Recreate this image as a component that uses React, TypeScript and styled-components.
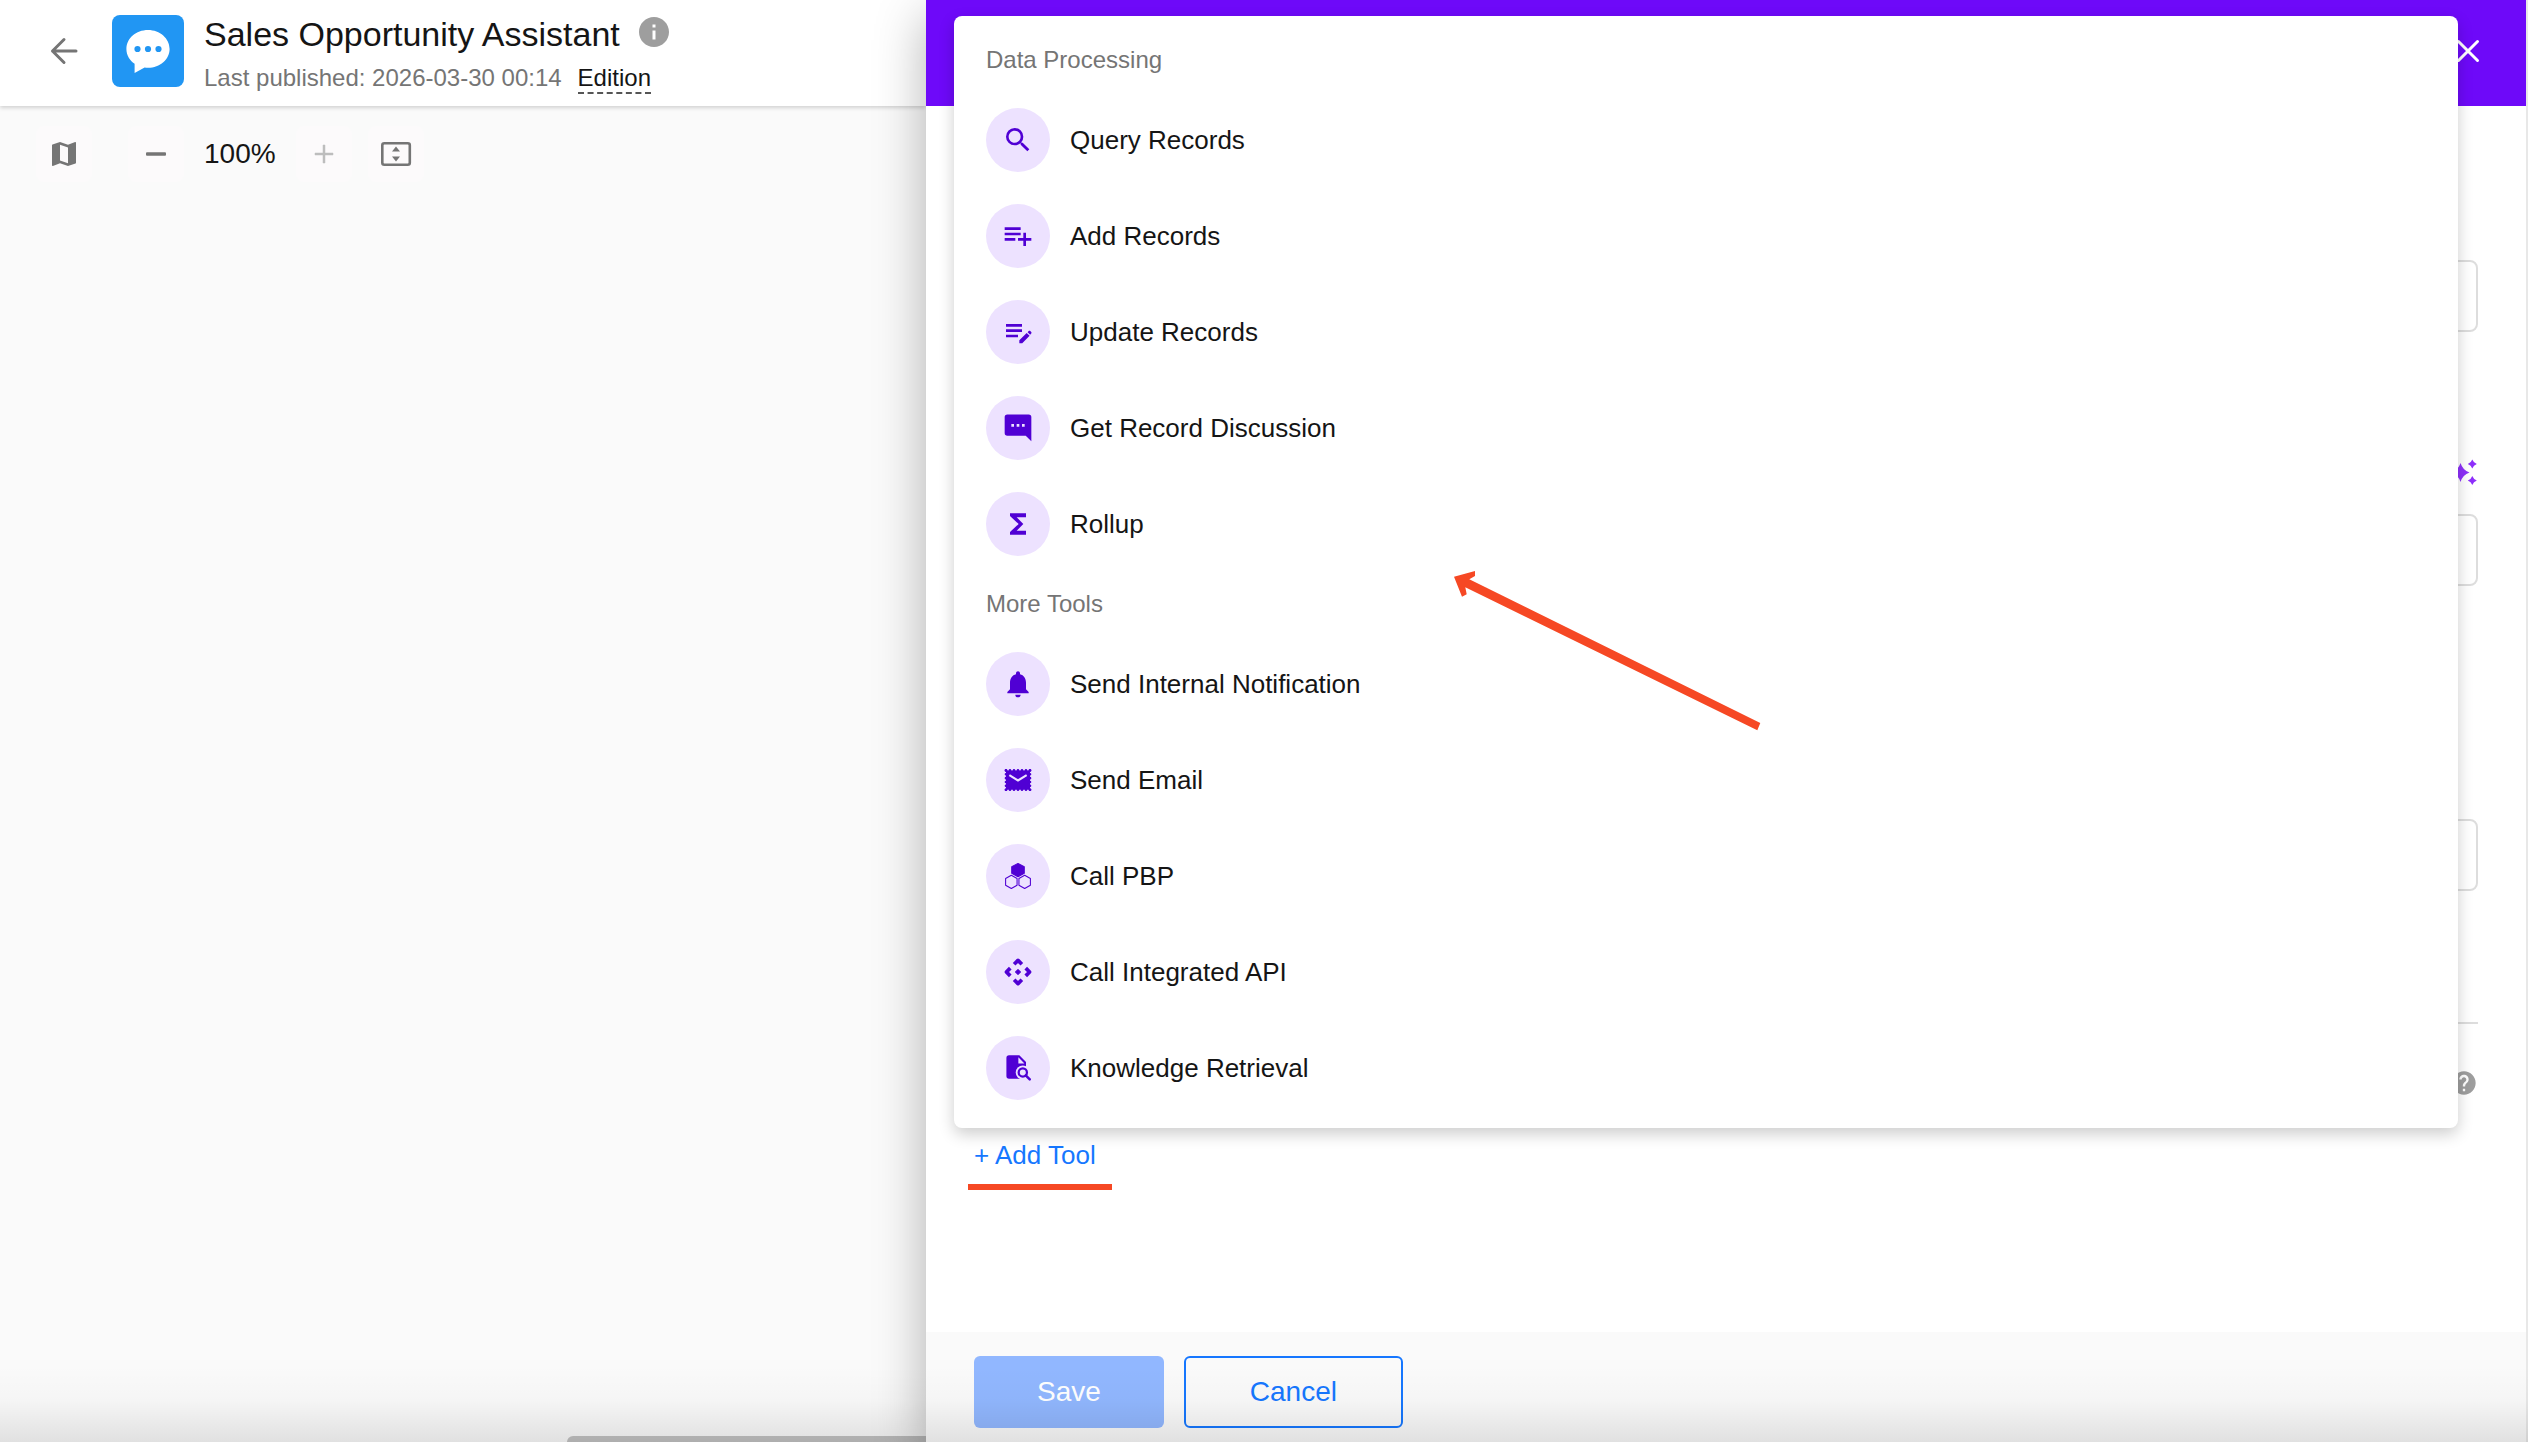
import React from "react";
import styled, { createGlobalStyle } from "styled-components";
import {
  MdFunctions,
  MdHelp,
  MdInfo,
  MdMap,
  MdNotifications,
  MdSearch,
} from "react-icons/md";

const color = {
  text: "#151515",
  muted: "#757575",
  faint: "#9e9e9e",
  disabled: "#bdbdbd",
  canvas: "#fafafa",
  line: "#dddddd",
  blue: "#1677ff",
  appBlue: "#2196f3",
  purple: "#6e09f9",
  toolPurple: "#5000d4",
  toolTint: "#ede2ff",
  mark: "#f64824",
};

const GlobalStyle = createGlobalStyle`
  *, *::before, *::after { box-sizing: border-box; }
  body {
    margin: 0;
    background: ${color.canvas};
    color: ${color.text};
    font-family: "Liberation Sans", Arial, sans-serif;
  }
  button, input { font: inherit; }
  button { padding: 0; border: 0; background: none; cursor: pointer; }
  svg { display: block; flex: none; }
`;

const Page = styled.div`
  position: relative;
  display: flex;
  min-height: 100vh;
  overflow: hidden;
`;

const BottomFade = styled.div`
  position: absolute;
  left: 0;
  right: 0;
  bottom: 0;
  height: 76px;
  z-index: 3;
  pointer-events: none;
  background: linear-gradient(
    to bottom,
    rgba(0, 0, 0, 0),
    rgba(0, 0, 0, 0.02) 45%,
    rgba(0, 0, 0, 0.1)
  );
`;

/* Workflow side */

const Workspace = styled.main`
  flex: 1;
  min-width: 0;
  display: flex;
  flex-direction: column;
`;

const TopBar = styled.header`
  display: flex;
  align-items: center;
  height: 106px;
  padding: 0 0 4px 36px;
  background: #fff;
  box-shadow: 0 2px 4px rgba(0, 0, 0, 0.16);
`;

const IconButton = styled.button<{ $tinted?: boolean; $color?: string }>`
  display: flex;
  align-items: center;
  justify-content: center;
  width: 56px;
  height: 56px;
  border-radius: 8px;
  color: ${(p) => p.$color ?? color.muted};
  background: ${(p) => (p.$tinted ? "#fcfafb" : "transparent")};
`;

const AppBadge = styled.div`
  width: 72px;
  height: 72px;
  margin: 0 20px;
  border-radius: 8px;
  background: ${color.appBlue};
`;

const Heading = styled.div`
  display: flex;
  flex-direction: column;
  gap: 10px;
  padding-top: 6px;
`;

const TitleRow = styled.div`
  display: flex;
  align-items: flex-start;
  gap: 16px;
  height: 40px;
  color: ${color.faint};
`;

const Title = styled.h1`
  margin: 0;
  font-size: 34px;
  font-weight: 400;
  line-height: 40px;
  color: ${color.text};
  white-space: nowrap;
`;

const Published = styled.div`
  display: flex;
  gap: 16px;
  font-size: 24px;
  line-height: 28px;
  color: ${color.muted};
  white-space: nowrap;
`;

const EditionLink = styled.a`
  color: ${color.text};
  text-decoration: none;
  border-bottom: 2px dashed #555;
`;

const Toolbar = styled.div`
  display: flex;
  align-items: center;
  padding: 20px 36px;
`;

const ZoomGroup = styled.div`
  display: flex;
  align-items: center;
  gap: 20px;
  margin: 0 16px 0 36px;
`;

const ZoomValue = styled.output`
  font-size: 28px;
  line-height: 32px;
`;

const ScrollTrack = styled.div`
  display: flex;
  justify-content: flex-end;
  margin-top: auto;
`;

const ScrollThumb = styled.div`
  width: 359px;
  height: 6px;
  border-top-left-radius: 6px;
  background: #c2c2c2;
`;

/* Drawer */

const Drawer = styled.aside`
  position: relative;
  z-index: 1;
  display: flex;
  flex-direction: column;
  width: 1602px;
  border-right: 2px solid #e8e8e8;
  background: #fff;
  box-shadow: 0 16px 48px rgba(0, 0, 0, 0.3);
`;

const DrawerHead = styled.header`
  display: flex;
  align-items: center;
  justify-content: flex-end;
  height: 106px;
  padding: 0 30px 4px 0;
  background: ${color.purple};
`;

const DrawerBody = styled.div`
  flex: 1;
  display: flex;
  flex-direction: column;
  align-items: stretch;
  padding: 0 48px;
`;

const Field = styled.input<{ $top: number }>`
  width: 100%;
  height: 72px;
  margin: ${(p) => p.$top}px 0 0;
  padding: 0 24px;
  border: 2px solid ${color.line};
  border-radius: 8px;
  background: #fff;
  font-size: 26px;
`;

const FieldHead = styled.div<{ $top: number }>`
  display: flex;
  align-items: center;
  justify-content: flex-end;
  height: 44px;
  margin-top: ${(p) => p.$top}px;
  color: ${color.faint};
`;

const Divider = styled.hr`
  width: 100%;
  margin: 131px 0 0;
  border: 0;
  border-top: 2px solid ${color.line};
`;

const AddTool = styled.button`
  position: relative;
  align-self: flex-start;
  height: 44px;
  margin-top: 28px;
  font-size: 26px;
  line-height: 44px;
  color: ${color.blue};
`;

const Underline = styled.span`
  position: absolute;
  left: -6px;
  right: -16px;
  top: 51px;
  height: 6px;
  background: ${color.mark};
`;

const DrawerFoot = styled.footer`
  display: flex;
  gap: 20px;
  height: 110px;
  padding: 24px 48px 0;
  background: ${color.canvas};
`;

const Action = styled.button<{ $outlined?: boolean }>`
  height: 72px;
  padding: 0 ${(p) => (p.$outlined ? 64 : 63)}px;
  border: ${(p) => (p.$outlined ? `2px solid ${color.blue}` : "0")};
  border-radius: 6px;
  font-size: 28px;
  line-height: 32px;
  color: ${(p) => (p.$outlined ? color.blue : "#fff")};
  background: ${(p) => (p.$outlined ? "transparent" : "#91b7ff")};
`;

/* Tool menu */

const Menu = styled.div`
  position: absolute;
  z-index: 2;
  top: 16px;
  left: 28px;
  right: 68px;
  padding: 12px 0;
  border-radius: 8px;
  background: #fff;
  box-shadow: 0 6px 16px rgba(0, 0, 0, 0.2);
`;

const MenuLabel = styled.div`
  padding: 0 32px;
  font-size: 24px;
  line-height: 64px;
  color: ${color.muted};
`;

const MenuItem = styled.button`
  display: flex;
  align-items: center;
  gap: 20px;
  width: 100%;
  height: 96px;
  padding: 0 32px;
  font-size: 26px;
  line-height: 32px;
  color: ${color.text};
  text-align: left;
`;

const ToolCircle = styled.span`
  display: flex;
  align-items: center;
  justify-content: center;
  width: 64px;
  height: 64px;
  border-radius: 50%;
  color: ${color.toolPurple};
  background: ${color.toolTint};
`;

const Pointer = styled.svg`
  position: absolute;
  left: 500px;
  top: 555px;
  pointer-events: none;
`;

/* Icons */

const Glyph = ({ children }: { children: React.ReactNode }) => (
  <svg width="32" height="32" viewBox="0 0 24 24" fill="currentColor" aria-hidden="true">
    {children}
  </svg>
);

const AddRecordsIcon = () => (
  <Glyph>
    <path d="M14 9.500H2v2h12v-2zm0-4H2v2h12v-2zm4 8v-4h-2v4h-4v2h4v4h2v-4h4v-2h-4zM2 15.500h8v-2H2v2z" />
  </Glyph>
);

const UpdateRecordsIcon = () => (
  <Glyph>
    <path d="M3 6h12v2H3zM3 10h12v2H3zM3 14h9v2H3z" />
    <path d="M19.200 12.100l.8-.8c.3-.3.9-.3 1.200 0l.7.7c.3.300.3.900 0 1.200l-.8.800zM18.500 12.700l2.200 2.200-5.500 5.500H13v-2.200z" />
  </Glyph>
);

const DiscussionIcon = () => (
  <Glyph>
    <path
      fillRule="evenodd"
      d="M4 1.800h16a2 2 0 0 1 2 2V22l-4.200-4.200H4a2 2 0 0 1-2-2v-12a2 2 0 0 1 2-2zM7 9v2h2V9zM11 9v2h2V9zM15 9v2h2V9z"
    />
  </Glyph>
);

const StampIcon = () => (
  <Glyph>
    <rect x="3" y="4.800" width="18" height="14.500" />
    <g stroke="currentColor" strokeWidth="2" strokeLinecap="round">
      <path d="M3 4.800H21.100M3 19.300H21.100" strokeDasharray="0 3" />
      <path d="M3 4.800V19.400M21 4.800V19.400" strokeDasharray="0 2.900" />
    </g>
    <path d="M5.500 8.300L12 12.300l6.500-4" fill="none" stroke={color.toolTint} strokeWidth="1.600" />
  </Glyph>
);

const HexagonsIcon = () => (
  <Glyph>
    <path
      d="M12 2.600l4.700 2.400v5L12 12.500 7.300 10V5z"
      stroke="currentColor"
      strokeWidth="0.800"
      strokeLinejoin="round"
    />
    <g fill="none" stroke="currentColor" strokeWidth="0.800" strokeLinejoin="round">
      <path d="M7 11.500l4.300 2.400v5L7 21.400l-4.300-2.500v-5z" />
      <path d="M17 11.500l4.300 2.400v5L17 21.400l-4.300-2.500v-5z" />
    </g>
  </Glyph>
);

const ApiIcon = () => (
  <Glyph>
    <g fill="none" stroke="currentColor" strokeWidth="2.800" strokeLinejoin="round">
      {[0, 90, 180, 270].map((turn) => (
        <path key={turn} d="M9.100 6.200L12 3.300l2.900 2.900" transform={`rotate(${turn} 12 12)`} />
      ))}
    </g>
    <path
      d="M12 10.200l1.800 1.800-1.800 1.800-1.800-1.800z"
      stroke="currentColor"
      strokeWidth="0.800"
      strokeLinejoin="round"
    />
  </Glyph>
);

const KnowledgeIcon = () => (
  <Glyph>
    <path d="M5.300 2.500H13L18 7.500V20H5.300a2 2 0 0 1-2-2V4.500a2 2 0 0 1 2-2z" />
    <path d="M12.300 4v4.600h4.500z" fill={color.toolTint} />
    <circle cx="15.600" cy="15.400" r="5.300" fill={color.toolTint} />
    <path d="M15 20.700L19 13l4 8z" fill={color.toolTint} />
    <circle cx="15.600" cy="15.300" r="3.100" fill="none" stroke="currentColor" strokeWidth="1.700" />
    <path d="M17.800 17.500l3 3" stroke="currentColor" strokeWidth="1.900" strokeLinecap="round" />
  </Glyph>
);

const BackIcon = () => (
  <svg width="32" height="32" viewBox="0 0 32 32" fill="none" stroke="currentColor" strokeWidth="3" strokeLinecap="round" strokeLinejoin="round" aria-hidden="true">
    <path d="M28 16H4.500M16 4.500L4.500 16 16 27.500" />
  </svg>
);

const ChatLogo = () => (
  <svg width="72" height="72" viewBox="0 0 72 72" aria-hidden="true">
    <path
      fill="#fff"
      d="M36 15c-12 0-21.600 8.400-21.600 18.900 0 6.200 3.300 11.400 8.200 14.800V58l10-5.600c1.100.2 2.300.3 3.400.3 12 0 21.600-8.400 21.600-18.800S48 15 36 15z"
    />
    <g fill={color.appBlue}>
      <circle cx="25.500" cy="34" r="3.100" />
      <circle cx="36" cy="34" r="3.100" />
      <circle cx="46.500" cy="34" r="3.100" />
    </g>
  </svg>
);

const MinusIcon = () => (
  <svg width="32" height="32" viewBox="0 0 32 32" aria-hidden="true">
    <rect x="6" y="14.200" width="20" height="3.600" rx="1" fill="currentColor" />
  </svg>
);

const PlusIcon = () => (
  <svg width="32" height="32" viewBox="0 0 32 32" aria-hidden="true">
    <path d="M15 7h2v8h8v2h-8v8h-2v-8H7v-2h8z" fill="currentColor" stroke="currentColor" strokeWidth="0.500" />
  </svg>
);

const FitIcon = () => (
  <svg width="32" height="32" viewBox="0 0 32 32" aria-hidden="true">
    <rect x="2.300" y="5.200" width="27.500" height="21.600" rx="2" fill="none" stroke="currentColor" strokeWidth="2.600" />
    <path d="M16 8.500l4 5h-8zM16 23.500l4-5h-8z" fill="currentColor" />
  </svg>
);

const CloseIcon = () => (
  <svg width="32" height="32" viewBox="0 0 32 32" fill="none" stroke="currentColor" strokeWidth="3" strokeLinecap="round" aria-hidden="true">
    <path d="M6.500 6.500l19 19M25.500 6.500l-19 19" />
  </svg>
);

const SparkleIcon = () => (
  <svg width="28" height="28" viewBox="0 0 28 28" fill="#8e30fb" aria-hidden="true">
    <path d="M10.500 5Q12.800 12.300 19.500 14.500 12.800 16.700 10.500 24 8.200 16.700 1.500 14.500 8.200 12.300 10.500 5z" />
    <path d="M22.300 1.500q1.200 3.300 4.500 4.500-3.300 1.200-4.500 4.500-1.200-3.300-4.500-4.500 3.300-1.200 4.500-4.500z" />
    <path d="M22.300 18q1.200 3.300 4.500 4.500-3.300 1.200-4.500 4.500-1.200-3.300-4.500-4.500 3.300-1.200 4.500-4.500z" />
  </svg>
);

const sections = [
  {
    label: "Data Processing",
    tools: [
      { name: "Query Records", icon: <MdSearch size={32} /> },
      { name: "Add Records", icon: <AddRecordsIcon /> },
      { name: "Update Records", icon: <UpdateRecordsIcon /> },
      { name: "Get Record Discussion", icon: <DiscussionIcon /> },
      { name: "Rollup", icon: <MdFunctions size={32} /> },
    ],
  },
  {
    label: "More Tools",
    tools: [
      { name: "Send Internal Notification", icon: <MdNotifications size={32} /> },
      { name: "Send Email", icon: <StampIcon /> },
      { name: "Call PBP", icon: <HexagonsIcon /> },
      { name: "Call Integrated API", icon: <ApiIcon /> },
      { name: "Knowledge Retrieval", icon: <KnowledgeIcon /> },
    ],
  },
];

export default function App() {
  return (
    <Page>
      <GlobalStyle />
      <Workspace>
        <TopBar>
          <IconButton aria-label="Back">
            <BackIcon />
          </IconButton>
          <AppBadge>
            <ChatLogo />
          </AppBadge>
          <Heading>
            <TitleRow>
              <Title>Sales Opportunity Assistant</Title>
              <MdInfo size={36} />
            </TitleRow>
            <Published>
              <span>Last published: 2026-03-30 00:14</span>
              <EditionLink href="#edition">Edition</EditionLink>
            </Published>
          </Heading>
        </TopBar>
        <Toolbar>
          <IconButton $tinted aria-label="Map">
            <MdMap size={32} />
          </IconButton>
          <ZoomGroup>
            <IconButton $tinted aria-label="Zoom out">
              <MinusIcon />
            </IconButton>
            <ZoomValue>100%</ZoomValue>
            <IconButton $tinted $color={color.disabled} aria-label="Zoom in">
              <PlusIcon />
            </IconButton>
          </ZoomGroup>
          <IconButton $tinted aria-label="Fit to screen">
            <FitIcon />
          </IconButton>
        </Toolbar>
        <ScrollTrack>
          <ScrollThumb />
        </ScrollTrack>
      </Workspace>

      <Drawer>
        <DrawerHead>
          <IconButton $color="#fff" aria-label="Close">
            <CloseIcon />
          </IconButton>
        </DrawerHead>
        <DrawerBody>
          <Field $top={154} aria-label="Name" />
          <FieldHead $top={118}>
            <SparkleIcon />
          </FieldHead>
          <Field $top={20} aria-label="Prompt" />
          <Field $top={233} aria-label="Model" />
          <Divider />
          <FieldHead $top={37}>
            <MdHelp size={28} />
          </FieldHead>
          <AddTool>
            + Add Tool
            <Underline />
          </AddTool>
        </DrawerBody>
        <DrawerFoot>
          <Action>Save</Action>
          <Action $outlined>Cancel</Action>
        </DrawerFoot>

        <Menu>
          {sections.map((section) => (
            <section key={section.label}>
              <MenuLabel>{section.label}</MenuLabel>
              {section.tools.map((tool) => (
                <MenuItem key={tool.name}>
                  <ToolCircle>{tool.icon}</ToolCircle>
                  {tool.name}
                </MenuItem>
              ))}
            </section>
          ))}
          <Pointer width="308" height="162" viewBox="0 0 308 162" aria-hidden="true">
            <path
              fill={color.mark}
              d="M0 5.700L21 0v5l-5.700 3.300L306.300 152l-3 7.300L11.300 16.300l1.400 7L8 25.700z"
            />
          </Pointer>
        </Menu>
      </Drawer>
      <BottomFade />
    </Page>
  );
}
